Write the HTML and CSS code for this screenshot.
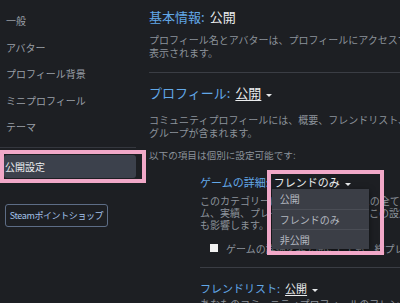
FILE: index.html
```html
<!DOCTYPE html>
<html lang="ja">
<head>
<meta charset="utf-8">
<link rel="stylesheet" href="styles.css">
</head>
<body>
<div class="page">
  <nav class="side">
    <div class="nav-item">一般</div>
    <div class="nav-item">アバター</div>
    <div class="nav-item">プロフィール背景</div>
    <div class="nav-item">ミニプロフィール</div>
    <div class="nav-item">テーマ</div>
    <div class="nav-sep"></div>
    <div class="nav-item selected">公開設定<span class="annot annot-nav"></span></div>
    <div class="shop-btn">Steamポイントショップ</div>
  </nav>
  <main class="main">
    <div class="heading h-basic"><span class="label">基本情報:</span><span class="val">公開</span></div>
    <p class="desc d-basic">プロフィール名とアバターは、プロフィールにアクセスするすべてのユーザーに<br>表示されます。</p>
    <div class="sep sep-main"></div>
    <div class="heading h-profile"><span class="label">プロフィール:</span><span class="val link">公開</span><span class="caret"></span></div>
    <p class="desc d-profile">コミュニティプロフィールには、概要、フレンドリスト、バッジ、レベル、ショーケース、コメント、<br>グループが含まれます。</p>
    <p class="desc d-note">以下の項目は個別に設定可能です:</p>
    <section class="sub">
      <div class="subhead sh-games"><span class="label">ゲームの詳細:</span><span class="trigger"><span class="val link">フレンドのみ</span><span class="caret"></span>
        <span class="annot annot-menu"></span>
        <span class="menu">
          <span class="menu-item">公開</span>
          <span class="menu-item">フレンドのみ</span>
          <span class="menu-item">非公開</span>
        </span>
      </span></div>
      <p class="subdesc">このカテゴリーには、所有するゲームの全てのゲー<br>ム、実績、プレイ時間が含まれます。この設定はゲームのプレイ状況の表示に<br>も影響します。</p>
      <div class="check-row"><span class="checkbox"></span><span class="check-text">ゲームの詳細を非公開にしても、総プレイ時間を常に非公開にする</span></div>
      <div class="sep sep-sub"></div>
      <div class="subhead sh-friends"><span class="label">フレンドリスト:</span><span class="val link">公開</span><span class="caret"></span></div>
      <p class="subdesc sd-friends">あなたのコミュニティプロフィールのフレンドリストを表示できるユーザーを設定します。</p>
    </section>
  </main>
</div>
</body>
</html>
```
FILE: styles.css
```css
html, body {
  margin: 0;
  padding: 0;
  background: #1d1f23;
  overflow: hidden;
  width: 400px;
  height: 303px;
}
body {
  font-family: "Noto Sans CJK JP", "Noto Sans", sans-serif;
  color: #8c939b;
}
.page {
  display: flex;
  width: 400px;
  height: 303px;
}
.side {
  width: 136px;
  flex: none;
  display: flex;
  flex-direction: column;
  padding-top: 8px;
}
.nav-item {
  font-size: 10px;
  line-height: 26.5px;
  padding-left: 6px;
  color: #9a9fa7;
  white-space: nowrap;
}
.nav-sep {
  margin-top: 6px;
  height: 1px;
  background: #34373e;
}
.nav-item.selected {
  position: relative;
  margin-top: 7px;
  margin-left: 4px;
  width: 132px;
  height: 23px;
  line-height: 23px;
  padding-left: 1px;
  box-sizing: border-box;
  background: #3c414c;
  border-radius: 3px;
  color: #eceef0;
}
.annot {
  position: absolute;
  border: 4px solid #f1a8c8;
  box-sizing: border-box;
  pointer-events: none;
}
.annot-nav {
  left: -4px;
  top: -5px;
  right: -10px;
  bottom: -5px;
}
.shop-btn {
  margin-top: 26.5px;
  margin-left: 5px;
  width: 103px;
  height: 23px;
  box-sizing: border-box;
  border: 1px solid #5d6d86;
  border-radius: 3px;
  color: #a4c2ea;
  font-size: 9px;
  letter-spacing: -0.4px;
  display: flex;
  align-items: center;
  justify-content: center;
  white-space: nowrap;
}
.main {
  flex: 1;
  min-width: 0;
  padding-left: 13px;
  padding-top: 8px;
  white-space: nowrap;
}
p { margin: 0; }
.heading {
  font-size: 13px;
  line-height: 18px;
  height: 18px;
  display: flex;
  align-items: center;
}
.label { color: #62a8e8; flex: none; }
.val {
  color: #eaecee;
  margin-left: 5px;
  flex: none;
}
.link {
  text-decoration: underline;
  text-decoration-thickness: 1px;
  text-underline-offset: 2px;
}
.caret {
  display: inline-block;
  flex: none;
  width: 0;
  height: 0;
  border-left: 3px solid transparent;
  border-right: 3px solid transparent;
  border-top: 3px solid #e6e8ea;
  margin-left: 5px;
  margin-top: 4px;
}
.desc {
  font-size: 10px;
  line-height: 13px;
}
.d-basic { margin-top: 6.5px; }
.sep {
  height: 1px;
  background: #3a3d44;
}
.sep-main { margin-top: 13.5px; }
.h-profile { margin-top: 11px; }
.d-profile { margin-top: 10.5px; }
.d-note { margin-top: 10px; font-size: 9.6px; }
.sub { padding-left: 51px; }
.subhead {
  font-size: 11px;
  line-height: 16px;
  height: 16px;
  display: flex;
  align-items: center;
}
.sh-games { margin-top: 12.5px; }
.trigger {
  position: relative;
  display: inline-flex;
  flex: none;
  align-items: center;
  height: 16px;
  margin-left: 5px;
}
.trigger .val { margin-left: 0; }
.annot-menu {
  left: -7px;
  top: -4px;
  width: 117px;
  height: 85px;
  z-index: 2;
}
.menu {
  position: absolute;
  left: -2px;
  top: 15px;
  width: 97px;
  display: flex;
  flex-direction: column;
  background: #3b3e46;
  box-shadow: 0 2px 6px rgba(0,0,0,0.5);
  z-index: 1;
}
.menu-item {
  height: 19px;
  line-height: 19px;
  padding-left: 8px;
  font-size: 10px;
  color: #b5b9c0;
  border-top: 1px solid #4a4d55;
}
.menu-item:first-child {
  border-top: none;
  height: 20px;
  line-height: 20px;
}
.subdesc {
  margin-top: 5px;
  font-size: 10px;
  line-height: 12px;
}
.check-row {
  margin-top: 10px;
  height: 14px;
  display: flex;
  align-items: center;
  font-size: 10px;
}
.checkbox {
  flex: none;
  width: 8px;
  height: 8px;
  background: #f2f2f2;
  margin-left: 10px;
  margin-right: 8px;
}
.check-text { flex: none; }
.sep-sub { margin-top: 12px; }
.sh-friends { margin-top: 12px; }
.sd-friends { margin-top: 2px; }
```
